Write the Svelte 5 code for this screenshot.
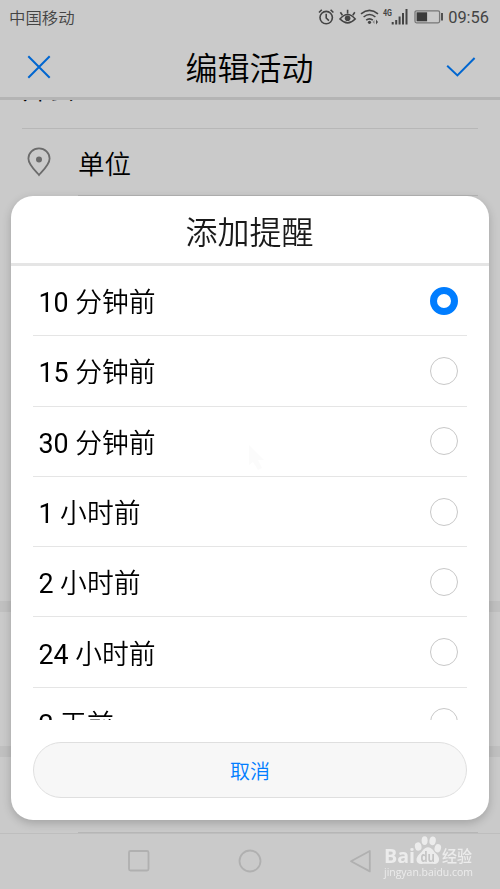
<script>
  let selected = 0;

  const reminders = [
    { count: 10, unit: '分钟前' },
    { count: 15, unit: '分钟前' },
    { count: 30, unit: '分钟前' },
    { count: 1, unit: '小时前' },
    { count: 2, unit: '小时前' },
    { count: 24, unit: '小时前' },
    { count: 2, unit: '天前' }
  ];
</script>

<div class="screen">
  <div class="status-bar">
    <span class="carrier">中国移动</span>
    <svg class="status-icons" width="126" height="20" viewBox="0 0 126 20" fill="none" stroke="#444" stroke-width="1.6">
      <!-- alarm -->
      <circle cx="9.2" cy="9.6" r="6.2" />
      <path d="M9.2 5.8v4.2l2.7 2.6M2 4.5l2.8-2.8M13.6 1.7l2.8 2.8" />
      <!-- eye -->
      <path d="M23 11q7.6-9 15.2 0q-7.6 7.8-15.2 0zM30.6 5.5V1.8M25.4 7.2l-2-2.9M35.8 7.2l2-2.9" />
      <circle cx="30.6" cy="10.3" r="2.8" fill="#444" stroke="none" />
      <!-- wifi -->
      <path d="M44 5.8q8.5-7 17 0M46.6 9q5.9-5 11.8 0M49.2 12.2q3.3-2.8 6.6 0" />
      <circle cx="52.5" cy="14.3" r="1.6" fill="#444" stroke="none" />
      <path d="M57.5 12v4l-2-2z" fill="#888" stroke="none" />
      <path d="M59 11.6v5l2-2.5z" fill="#444" stroke="none" />
      <!-- signal -->
      <path d="M75.7 14v2.5M79.2 12v4.5M82.6 8.5v8M86 5v11.5M89.5 1v15.5" stroke-width="2" />
      <text x="66" y="7.8" class="network" textLength="9" lengthAdjust="spacingAndGlyphs">4G</text>
      <!-- battery -->
      <rect x="98" y="2.8" width="24.6" height="12" rx="1.5" stroke="#777" stroke-width="1.3" />
      <rect x="99.6" y="4.3" width="10.5" height="9" fill="#3b3b3b" stroke="none" />
      <path d="M125 5v7.5" stroke="#444" stroke-width="1.8" />
    </svg>
    <span class="clock">09:56</span>
  </div>

  <header>
    <svg width="24" height="24" viewBox="0 0 24 24" fill="none" stroke="#0066d0" stroke-width="2">
      <path d="M1.3 1.3l21.4 21.4M22.7 1.3L1.3 22.7" />
    </svg>
    <h1>编辑活动</h1>
    <svg width="30" height="22" viewBox="0 0 30 22" fill="none" stroke="#0066d0" stroke-width="2">
      <path d="M1.2 9.8l10.2 9.6L28.6 2" />
    </svg>
  </header>

  <main>
    <div class="event-title">开会</div>
    <div class="location">
      <svg width="24" height="30" viewBox="0 0 24 30">
        <path d="M12 28C9 24.5 1.4 18 1.4 11.6A10.6 10.3 0 0 1 22.6 11.6C22.6 18 15 24.5 12 28z" fill="none" stroke="#6b6b6b" stroke-width="1.8" />
        <circle cx="12" cy="12.5" r="3" fill="#6b6b6b" />
      </svg>
      <span>单位</span>
    </div>
    <div class="divider"></div>
    <div class="section first"></div>
    <div class="section second"></div>
    <div class="section last"></div>
    <div class="divider bottom"></div>
  </main>

  <nav>
    <svg width="24" height="24" viewBox="0 0 24 24"><rect x="2" y="2" width="19.5" height="19.5" rx="1.5" /></svg>
    <svg width="24" height="24" viewBox="0 0 24 24"><circle cx="12" cy="12" r="10.5" /></svg>
    <svg width="24" height="24" viewBox="0 0 24 24"><path d="M20.8 2v20.4L2 12.2z" stroke-linejoin="round" /></svg>
  </nav>
</div>

<div class="sheet" role="dialog" aria-labelledby="sheet-title">
  <h2 id="sheet-title">添加提醒</h2>
  <div class="options" role="radiogroup">
    {#each reminders as reminder, i}
      <button
        class="option"
        type="button"
        role="radio"
        aria-checked={selected === i}
        on:click={() => (selected = i)}
      >
        <span><span class="count">{reminder.count}</span> {reminder.unit}</span>
        <span class="radio" class:checked={selected === i}></span>
      </button>
    {/each}
  </div>
  <button class="cancel" type="button">取消</button>
</div>

<svg class="pointer" width="18" height="28" viewBox="0 0 18 28" fill="#fbfbfb">
  <path d="M1 1v20l4-3 5 8 4-2-4-8h6z" />
</svg>

<svg class="watermark" width="100" height="48" viewBox="0 0 100 48" fill="#ececec">
  <text x="3" y="29" class="bai" textLength="31" lengthAdjust="spacingAndGlyphs">Bai</text>
  <ellipse cx="37.2" cy="12.5" rx="3.3" ry="4.2" transform="rotate(-12 37.2 12.5)" />
  <ellipse cx="43.6" cy="6.6" rx="3" ry="4.4" />
  <ellipse cx="51.6" cy="6.8" rx="3.2" ry="4.4" transform="rotate(8 51.6 6.8)" />
  <ellipse cx="56.8" cy="14.2" rx="3.2" ry="4.2" transform="rotate(15 56.8 14.2)" />
  <path d="M47 13.2c4 0 5.4 4 8.2 6.5c5 4.5 3 10.5-2 10.3c-3-.2-9.5-.2-12.5 0c-6 .2-7-6-2-10.3c3-2.5 4.3-6.5 8.3-6.5z" />
  <text x="39.5" y="27.5" class="du" textLength="14.5" lengthAdjust="spacingAndGlyphs">du</text>
  <text x="61" y="28" class="jingyan" textLength="30" lengthAdjust="spacingAndGlyphs">经验</text>
  <text x="3" y="41.5" class="site" textLength="89" lengthAdjust="spacingAndGlyphs">jingyan.baidu.com</text>
</svg>

<style>
  :global(body) {
    overflow: hidden;
    background: #cacaca;
  }

  .screen,
  .sheet {
    font-family: Roboto, 'Noto Sans CJK SC', sans-serif;
    color: #000;
  }

  .screen {
    display: flex;
    flex-direction: column;
    height: 889px;
    overflow: hidden;
  }

  .status-bar {
    display: flex;
    align-items: center;
    height: 34px;
    padding: 0 11px 0 9px;
    color: #444;
    font-size: 16.4px;
    font-weight: 350;
    flex-shrink: 0;
    box-sizing: border-box;
  }

  .status-icons {
    margin: 1px 0 0 auto;
  }

  .network {
    fill: #444;
    stroke: none;
    font: bold 8.5px Roboto, sans-serif;
  }

  .clock {
    margin-left: 5px;
    font-weight: 400;
    font-size: 16.4px;
  }

  header {
    display: flex;
    align-items: center;
    justify-content: space-between;
    height: 66px;
    padding: 2px 24px 0 27px;
    border-bottom: 3px solid #b4b4b4;
    background: #cacaca;
    box-sizing: border-box;
    flex-shrink: 0;
    z-index: 1;
  }

  h1,
  h2 {
    margin: 0;
    font-size: 32px;
    font-weight: 350;
    line-height: 46px;
  }

  h1 {
    padding: 5px 0 0 2px;
  }

  main {
    flex: 1;
    display: flex;
    flex-direction: column;
    min-height: 0;
  }

  .event-title {
    height: 66px;
    margin: -38px 22px 0;
    border-bottom: 1px solid #b7b7b7;
    font-size: 26.5px;
    font-weight: 350;
    line-height: 55px;
  }

  .location {
    display: flex;
    align-items: center;
    gap: 27px;
    height: 66px;
    padding: 0 27px;
    font-size: 26.5px;
    font-weight: 350;
  }

  .divider {
    height: 1px;
    margin: 0 22px 0 78px;
    background: #b4b4b4;
  }

  .section {
    border-bottom: 11px solid #c0c0c0;
  }

  .first {
    height: 405px;
  }

  .second {
    height: 134px;
  }

  .last {
    flex: 1;
    border: 0;
  }

  .divider.bottom {
    height: 2px;
    background: #b6b6b6;
  }

  nav {
    display: flex;
    justify-content: center;
    gap: 87px;
    height: 56px;
    padding-top: 15px;
    box-sizing: border-box;
    border-top: 1px solid #bebebe;
    margin-top: -1px;
    flex-shrink: 0;
  }

  nav svg {
    fill: none;
    stroke: #b0b0b0;
    stroke-width: 1.8;
  }

  .sheet {
    position: fixed;
    top: 196px;
    left: 11px;
    display: flex;
    flex-direction: column;
    width: 478px;
    height: 623.5px;
    border-radius: 22px;
    background: #fff;
    box-shadow: 0 3px 10px rgba(0, 0, 0, 0.2);
  }

  h2 {
    height: 70px;
    padding-right: 1px;
    border-bottom: 3px solid #e5e5e5;
    box-sizing: border-box;
    color: #1a1a1a;
    line-height: 74px;
    text-align: center;
  }

  .options {
    height: 454px;
    margin: 0 22px;
    overflow: hidden;
  }

  .option {
    display: flex;
    align-items: center;
    justify-content: space-between;
    width: 100%;
    height: 70.3px;
    padding: 0 9px 0 5.5px;
    border: 0;
    border-bottom: 1px solid #e5e5e5;
    background: none;
    box-sizing: border-box;
    color: #000;
    font: inherit;
    font-size: 26.8px;
    font-weight: 350;
  }

  .count {
    font-weight: 400;
  }

  .radio {
    width: 28px;
    height: 28px;
    border: 1.5px solid #c8c8c8;
    border-radius: 50%;
    box-sizing: border-box;
  }

  .radio.checked {
    border: 7px solid #007dff;
  }

  .cancel {
    height: 56px;
    margin: 22px 22px 0;
    border: 1px solid #dfdfdf;
    border-radius: 28px;
    background: #f7f7f7;
    color: #007dff;
    font: inherit;
    font-size: 20px;
    font-weight: 350;
  }

  .pointer {
    position: fixed;
    top: 444px;
    left: 248px;
    pointer-events: none;
  }

  .watermark {
    position: fixed;
    top: 834px;
    left: 381px;
  }

  .bai {
    font: bold 20px 'Open Sans', sans-serif;
  }

  .du {
    fill: #c4c4c4;
    font: bold 14px 'Open Sans', sans-serif;
  }

  .jingyan {
    font: 500 16px 'Noto Sans CJK SC', sans-serif;
  }

  .site {
    font: 10.5px 'Open Sans', sans-serif;
  }
</style>
